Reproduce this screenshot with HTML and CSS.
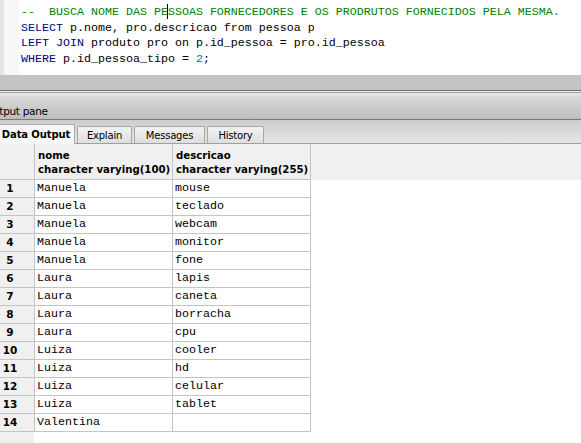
FILE: index.html
```html
<!DOCTYPE html>
<html>
<head>
<meta charset="utf-8">
<link rel="stylesheet" href="styles.css">
</head>
<body>
<div class="app">
  <div class="editor">
    <div class="margin-a"></div>
    <div class="margin-b"></div>
    <pre class="code"><span class="cm">--  BUSCA NOME DAS PE<span class="caret"></span>SSOAS FORNECEDORES E OS PRODRUTOS FORNECIDOS PELA MESMA.</span>
<span class="kw">SELECT</span> p.nome, pro.descricao from pessoa p
<span class="kw">LEFT JOIN</span> produto pro on p.id_pessoa = pro.id_pessoa
<span class="kw">WHERE</span> p.id_pessoa_tipo = <span class="num">2</span>;</pre>
  </div>
  <div class="hbar"></div>
  <div class="sash"></div>
  <div class="pane-title"><span class="pane-title-text">Output pane</span></div>
  <div class="tabbar">
    <div class="tab active">Data Output</div>
    <div class="tab">Explain</div>
    <div class="tab">Messages</div>
    <div class="tab">History</div>
  </div>
  <div class="grid">
    <div class="row head">
      <div class="cell rh"></div>
      <div class="cell col"><div>nome</div><div>character varying(100)</div></div>
      <div class="cell col"><div>descricao</div><div>character varying(255)</div></div>
      <div class="rest"></div>
    </div>
    <div class="row"><div class="cell rh">1</div><div class="cell d">Manuela</div><div class="cell d">mouse</div></div>
    <div class="row"><div class="cell rh">2</div><div class="cell d">Manuela</div><div class="cell d">teclado</div></div>
    <div class="row"><div class="cell rh">3</div><div class="cell d">Manuela</div><div class="cell d">webcam</div></div>
    <div class="row"><div class="cell rh">4</div><div class="cell d">Manuela</div><div class="cell d">monitor</div></div>
    <div class="row"><div class="cell rh">5</div><div class="cell d">Manuela</div><div class="cell d">fone</div></div>
    <div class="row"><div class="cell rh">6</div><div class="cell d">Laura</div><div class="cell d">lapis</div></div>
    <div class="row"><div class="cell rh">7</div><div class="cell d">Laura</div><div class="cell d">caneta</div></div>
    <div class="row"><div class="cell rh">8</div><div class="cell d">Laura</div><div class="cell d">borracha</div></div>
    <div class="row"><div class="cell rh">9</div><div class="cell d">Laura</div><div class="cell d">cpu</div></div>
    <div class="row"><div class="cell rh">10</div><div class="cell d">Luiza</div><div class="cell d">cooler</div></div>
    <div class="row"><div class="cell rh">11</div><div class="cell d">Luiza</div><div class="cell d">hd</div></div>
    <div class="row"><div class="cell rh">12</div><div class="cell d">Luiza</div><div class="cell d">celular</div></div>
    <div class="row"><div class="cell rh">13</div><div class="cell d">Luiza</div><div class="cell d">tablet</div></div>
    <div class="row"><div class="cell rh">14</div><div class="cell d">Valentina</div><div class="cell d"></div></div>
    <div class="filler"><div class="filler-rh"></div></div>
  </div>
</div>
</body>
</html>
```
FILE: styles.css
```css
html, body {
  margin: 0;
  padding: 0;
  background: #ffffff;
}
.app {
  width: 581px;
  height: 443px;
  overflow: hidden;
  display: flex;
  flex-direction: column;
  font-family: "DejaVu Sans", sans-serif;
}
.editor {
  height: 75px;
  display: flex;
  background: #ffffff;
  flex: none;
}
.margin-a {
  width: 4px;
  background: #e4e4e4;
}
.margin-b {
  width: 15px;
  background: #f7f7f7;
}
.code {
  margin: 0;
  padding: 4px 0 0 2px;
  font-family: "Liberation Mono", "Courier New", monospace;
  font-size: 11.67px;
  line-height: 15.7px;
  color: #000000;
  white-space: pre;
}
.cm { color: #007f00; }
.kw { color: #00007f; }
.num { color: #007f7f; }
.caret {
  display: inline-block;
  width: 0;
  height: 15px;
  border-left: 1px solid #000;
  margin-left: -1px;
  vertical-align: -4px;
}
.hbar {
  height: 15px;
  background: #c4c4c4;
  flex: none;
}
.sash {
  height: 6px;
  flex: none;
  background: linear-gradient(to bottom, #6e6e6e 0 1px, #ececec 1px 2px, #a4a4a4 2px 3px, #e2e2e2 3px 6px);
}
.pane-title {
  height: 24px;
  box-sizing: border-box;
  padding-top: 6px;
  flex: none;
  border-bottom: 1px solid #7a7a7a;
  background: linear-gradient(to bottom, #dadada, #bdbdbd);
  display: flex;
  align-items: center;
  font-size: 10.5px;
  color: #000;
}
.pane-title-text {
  margin-left: -15px;
  letter-spacing: -0.3px;
}
.tabbar {
  height: 23px;
  flex: none;
  border-bottom: 1px solid #a0a0a0;
  background: linear-gradient(to bottom, #cdcdcd, #e6e6e6);
  display: flex;
  align-items: flex-end;
  gap: 2px;
}
.tab {
  height: 16px;
  border: 1px solid #a8a8a8;
  border-bottom: none;
  border-radius: 2px 2px 0 0;
  background: linear-gradient(to bottom, #f2f2f2, #dedede);
  font-size: 10px;
  letter-spacing: -0.2px;
  display: flex;
  align-items: center;
  justify-content: center;
  color: #000;
}
.tab:nth-child(2) { width: 53px; }
.tab:nth-child(3) { width: 69px; }
.tab:nth-child(4) { width: 55px; }
.tab.active {
  height: 19px;
  width: 76px;
  margin-left: -3px;
  margin-bottom: -1px;
  background: #f7f7f7;
  font-weight: bold;
  letter-spacing: -0.1px;
}
.grid {
  flex: 1;
  display: flex;
  flex-direction: column;
  background: #ffffff;
}
.row {
  display: flex;
  height: 18px;
  flex: none;
}
.cell {
  box-sizing: border-box;
  border-right: 1px solid #c4c4c4;
  border-bottom: 1px solid #c4c4c4;
  height: 100%;
  flex: none;
}
.rh {
  width: 35px;
  background: #f0f0f0;
  font-weight: bold;
  font-size: 10.5px;
  text-align: center;
  padding-right: 14px;
  line-height: 16px;
  color: #000;
}
.cell.d, .cell.col {
  width: 138px;
}
.d {
  font-family: "Liberation Mono", "Courier New", monospace;
  font-size: 11.67px;
  line-height: 16px;
  padding-left: 2px;
  color: #000;
  white-space: pre;
}
.row.head {
  height: 36px;
  background: #f0f0f0;
}
.col {
  font-weight: bold;
  font-size: 10.2px;
  line-height: 14px;
  padding: 5px 0 0 3px;
  color: #000;
  white-space: nowrap;
  overflow: hidden;
}
.rest {
  flex: 1;
  border-bottom: 1px solid #f0f0f0;
}
.filler {
  flex: 1;
  display: flex;
}
.filler-rh {
  width: 34px;
  background: #f0f0f0;
}
```
